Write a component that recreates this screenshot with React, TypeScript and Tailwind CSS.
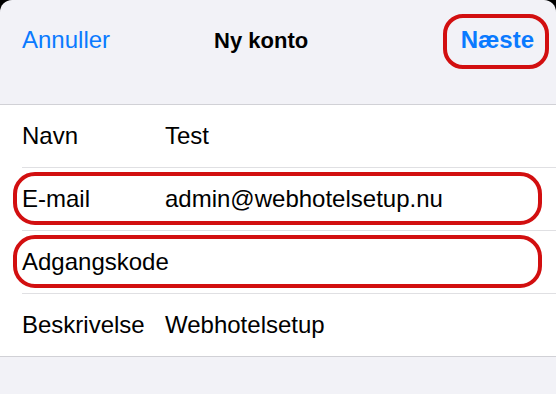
import React from "react";

const rows = [
  { label: "Navn", value: "Test", marked: false },
  { label: "E-mail", value: "admin@webhotelsetup.nu", marked: true },
  { label: "Adgangskode", value: "", marked: true },
  { label: "Beskrivelse", value: "Webhotelsetup", marked: false },
];

const App = () => {
  return (
    <div
      className="w-[556px] h-[394px] bg-black overflow-hidden"
      style={{ fontFamily: '"Liberation Sans", Arial, sans-serif' }}
    >
      <div className="h-full bg-[#f2f2f7] rounded-t-[12px] flex flex-col">
        {/* nav bar */}
        <div className="h-[105px] flex items-baseline pt-[24px] text-[24px] leading-[32px] border-b border-[#d1d1d6]">
          <button className="ml-[22px] text-[#0a7aff]">Annuller</button>
          <h1 className="ml-[104px] font-bold text-[22px] text-black">Ny konto</h1>
          <div className="ml-auto mr-[22px] relative">
            <button className="font-bold text-[#0a7aff]">Næste</button>
            <div className="absolute -left-[18px] -right-[15px] -top-[10px] -bottom-[13px] border-[4px] border-[#d20f10] rounded-[20px]" />
          </div>
        </div>

        {/* form */}
        <div className="bg-white border-b border-[#d1d1d6]">
          {rows.map((row, i) => (
            <div key={row.label} className="relative">
              {i > 0 && <div className="ml-[22px] h-px bg-[#e0e0e3]" />}
              <div className="h-[62px] flex items-center text-[24px] text-black">
                <span className="pl-[22px] w-[165px] shrink-0">{row.label}</span>
                <span>{row.value}</span>
              </div>
              {row.marked && (
                <div className="absolute left-[13px] right-[14px] top-[5px] bottom-[5px] border-[4px] border-[#d20f10] rounded-[22px]" />
              )}
            </div>
          ))}
        </div>
      </div>
    </div>
  );
};

export default App;
